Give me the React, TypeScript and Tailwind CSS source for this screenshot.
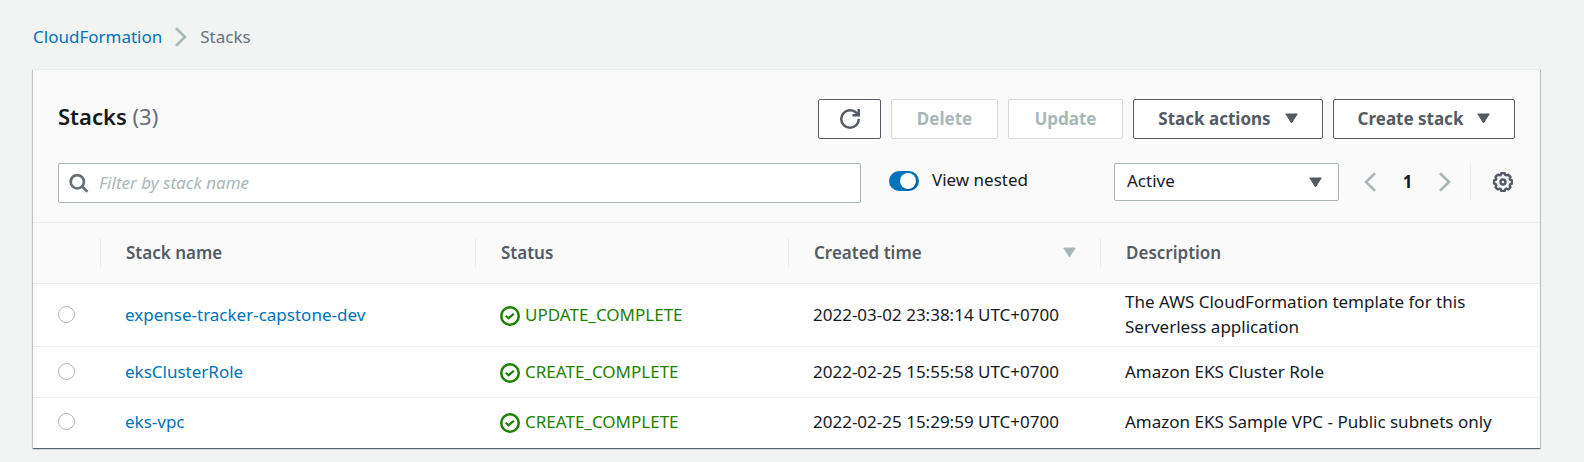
import React from 'react';

type Stack = { name: string; status: string; created: string; description: string };

const stacks: Stack[] = [
  {
    name: 'expense-tracker-capstone-dev',
    status: 'UPDATE_COMPLETE',
    created: '2022-03-02 23:38:14 UTC+0700',
    description: 'The AWS CloudFormation template for this Serverless application',
  },
  {
    name: 'eksClusterRole',
    status: 'CREATE_COMPLETE',
    created: '2022-02-25 15:55:58 UTC+0700',
    description: 'Amazon EKS Cluster Role',
  },
  {
    name: 'eks-vpc',
    status: 'CREATE_COMPLETE',
    created: '2022-02-25 15:29:59 UTC+0700',
    description: 'Amazon EKS Sample VPC - Public subnets only',
  },
];

function Caret({ className = '' }: { className?: string }) {
  return (
    <svg viewBox="0 0 13 11" className={`h-[11px] w-[13px] shrink-0 ${className}`} aria-hidden="true">
      <path d="M.8 1h11.400L6.5 10z" fill="currentColor" stroke="currentColor" strokeLinejoin="round" />
    </svg>
  );
}

function Chevron({ left = false }: { left?: boolean }) {
  return (
    <svg viewBox="0 0 12 20" className="h-5 w-3 shrink-0 text-[#aab7b8]" fill="none" stroke="currentColor" strokeWidth="2.6" aria-hidden="true">
      <path d={left ? 'M11 1.2L2 10l9 8.8' : 'M1 1.2l9 8.8-9 8.8'} />
    </svg>
  );
}

function RefreshIcon() {
  return (
    <svg viewBox="0 0 16 16" className="h-5 w-5" fill="none" stroke="currentColor" strokeWidth="2" aria-hidden="true">
      <path d="M10 5h5V0" />
      <path d="M15 8a6.957 6.957 0 0 1-7 7 6.957 6.957 0 0 1-7-7 6.957 6.957 0 0 1 7-7 6.87 6.87 0 0 1 6.3 4" />
    </svg>
  );
}

function SearchIcon() {
  return (
    <svg viewBox="0 0 20 20" className="h-5 w-5 shrink-0 text-[#687078]" fill="none" stroke="currentColor" strokeWidth="2.7" aria-hidden="true">
      <circle cx="8.3" cy="8.7" r="6.6" />
      <path d="M12.8 13.2l5.7 5.5" />
    </svg>
  );
}

function GearIcon() {
  return (
    <svg viewBox="0 0 20 20" className="h-5 w-5" fill="none" stroke="currentColor" strokeWidth="2.4" strokeLinejoin="round" aria-hidden="true">
      <path d="M8.3 1.2h3.4l.7 1.8 1 .4 1.8-.8 2.3 2.3-.8 1.8.4 1 1.8.7v3.3l-1.8.7-.4 1 .8 1.8-2.3 2.3-1.8-.8-1 .4-.7 1.8H8.3l-.7-1.8-1-.4-1.8.8-2.3-2.3.8-1.8-.4-1-1.8-.7V8.4l1.8-.7.4-1-.8-1.8 2.3-2.3 1.8.8 1-.4z" />
      <circle cx="10" cy="10" r="2.5" />
    </svg>
  );
}

function SuccessIcon() {
  return (
    <svg viewBox="0 0 16 16" className="mb-px h-5 w-5 shrink-0" fill="none" stroke="currentColor" strokeWidth="2" aria-hidden="true">
      <circle cx="8" cy="8" r="7" />
      <path d="M4.6 7.8l2.3 2 4.200-3.600" strokeWidth="1.8" />
    </svg>
  );
}

const button =
  'flex h-10 items-center justify-center rounded-[2px] border bg-white pb-px font-bold text-[17px] whitespace-nowrap border-[#545b64] text-[#545b64] disabled:border-[#d5dbdb] disabled:text-[#aab7b8]';

const cell = 'px-6 pt-[5px] pb-[7px]';

function HeaderCell({ label, last = false, sorted = false }: { label: string; last?: boolean; sorted?: boolean }) {
  return (
    <th scope="col" className="p-0 text-left font-semibold text-[#545b64]">
      <div className={`flex h-[30px] items-center justify-between pr-6 pb-0.5 pl-[25px] ${last ? '' : 'border-r border-[#eaeded]'}`}>
        {label}
        {sorted && <Caret className="text-[#aab7b8]" />}
      </div>
    </th>
  );
}

export default function App() {
  return (
    <main className="min-h-screen bg-[#f2f3f3] pt-6 pr-11 pb-3 pl-[33px] font-['Noto_Sans',sans-serif] text-[17px] leading-[25px] text-[#16191f]">
      <nav aria-label="Breadcrumb" className="mb-5 flex items-center gap-[13px]">
        <a href="#cloudformation" className="text-[#0073bb]">CloudFormation</a>
        <Chevron />
        <span className="text-[#687078]">Stacks</span>
      </nav>

      <section className="border-t border-[#eaeded] bg-white shadow-[0_1px_1px_0_rgba(0,28,36,0.5),1px_1px_1px_0_rgba(0,28,36,0.15),-1px_1px_1px_0_rgba(0,28,36,0.15)]">
        <header className="bg-[#fafafa] px-[25px] pt-[29px] pb-[19px]">
          <div className="flex items-start justify-between">
            <h1 className="pt-[3px] text-[22px] leading-7 font-semibold">
              Stacks <span className="font-normal text-[#687078]">(3)</span>
            </h1>
            <div className="flex gap-[10px]">
              <button type="button" aria-label="Refresh" className={`${button} w-[63px]`}><RefreshIcon /></button>
              <button type="button" disabled className={`${button} w-[107px]`}>Delete</button>
              <button type="button" disabled className={`${button} w-[115px]`}>Update</button>
              <button type="button" className={`${button} w-[190px] gap-[14px]`}>Stack actions<Caret /></button>
              <button type="button" className={`${button} w-[182px] gap-[14px]`}>Create stack<Caret /></button>
            </div>
          </div>

          <div className="mt-6 flex items-start">
            <label className="flex h-10 min-w-0 flex-1 items-center gap-[10px] rounded-[2px] border border-[#aab7b8] bg-white px-[10px]">
              <SearchIcon />
              <input
                type="text"
                aria-label="Filter by stack name"
                placeholder="Filter by stack name"
                className="min-w-0 flex-1 bg-transparent pb-0.5 outline-none placeholder:text-[#aab7b8] placeholder:italic"
              />
            </label>
            <label className="ml-7 flex h-9 w-[225px] items-center gap-[13px]">
              <input
                type="checkbox"
                role="switch"
                defaultChecked
                className="flex h-5 w-[30px] shrink-0 appearance-none items-center rounded-full bg-[#687078] px-[3px] before:h-4 before:w-4 before:rounded-full before:bg-white before:shadow-[1px_1px_1px_rgba(0,28,36,0.4)] checked:justify-end checked:bg-[#0073bb]"
              />
              <span className="pb-[3px]">View nested</span>
            </label>
            <div className="relative h-[38px] w-[225px]">
              <select aria-label="Stack status filter" className="h-full w-full appearance-none rounded-[2px] border border-[#aab7b8] bg-white px-3 pb-[3px] text-[#16191f]">
                <option>Active</option>
                <option>Deleted</option>
              </select>
              <Caret className="pointer-events-none absolute top-[14px] right-[17px] text-[#545b64]" />
            </div>
            <div className="ml-[25px] flex h-[38px] items-center">
              <button type="button" aria-label="Previous page"><Chevron left /></button>
              <span className="w-[63px] pb-0.5 text-center font-bold">1</span>
              <button type="button" aria-label="Next page"><Chevron /></button>
              <span className="ml-[19px] h-full border-l border-[#eaeded]" />
              <button type="button" aria-label="Preferences" className="mr-0.5 ml-[22px] text-[#545b64]"><GearIcon /></button>
            </div>
          </div>
        </header>

        <table className="w-full table-fixed border-collapse text-left">
          <colgroup>
            <col className="w-[68px]" />
            <col className="w-[375px]" />
            <col className="w-[313px]" />
            <col className="w-[312px]" />
            <col />
          </colgroup>
          <thead>
            <tr className="h-[61px] border-y border-[#eaeded] bg-[#fafafa]">
              <th scope="col" aria-label="Selection" className="p-0">
                <div className="h-[30px] border-r border-[#eaeded]" />
              </th>
              <HeaderCell label="Stack name" />
              <HeaderCell label="Status" />
              <HeaderCell label="Created time" sorted />
              <HeaderCell label="Description" last />
            </tr>
          </thead>
          <tbody>
            {stacks.map((s) => (
              <tr key={s.name} className="h-[51px] border-b border-[#eaeded] last:h-[50px] last:border-b-0">
                <td className="pt-0 pb-0.5 pl-[25px]">
                  <input
                    type="radio"
                    name="stack"
                    aria-label={`Select ${s.name}`}
                    className="block h-[17px] w-[17px] appearance-none rounded-full border border-[#aab7b8] bg-white checked:border-[5px] checked:border-[#0073bb]"
                  />
                </td>
                <td className={cell}><a href={`#${s.name}`} className="text-[#0073bb]">{s.name}</a></td>
                <td className={cell}>
                  <span className="flex items-end gap-[5px] text-[#1d8102]"><SuccessIcon />{s.status}</span>
                </td>
                <td className={`${cell} whitespace-nowrap`}>{s.created}</td>
                <td className={cell}>{s.description}</td>
              </tr>
            ))}
          </tbody>
        </table>
      </section>
    </main>
  );
}
